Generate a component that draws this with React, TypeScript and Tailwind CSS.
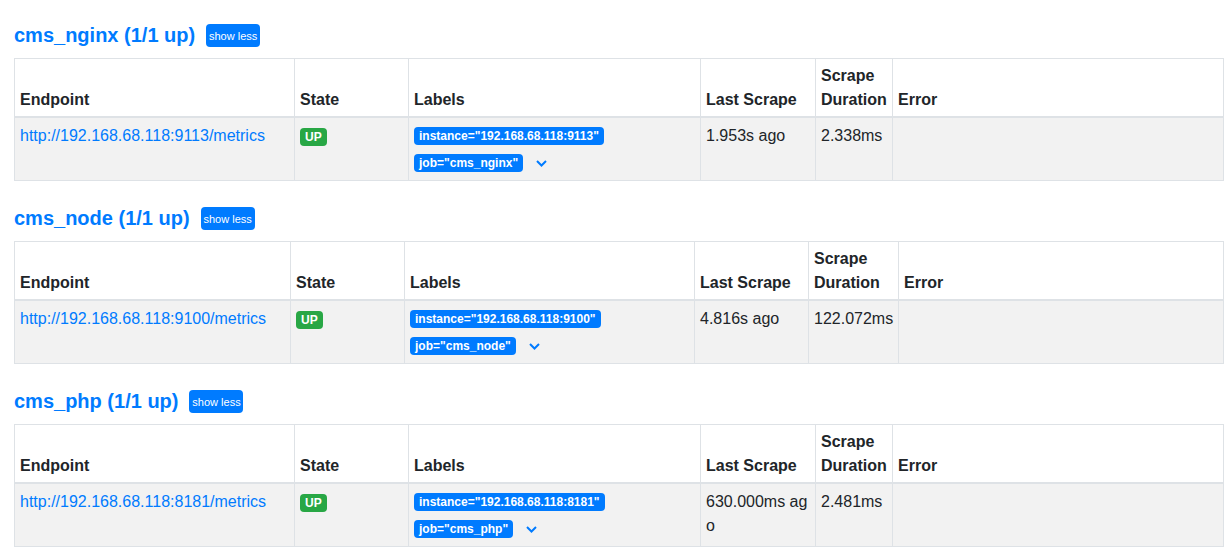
import React from 'react';

interface Target {
  endpoint: string;
  instance: string;
  job: string;
  lastScrape: string;
  duration: string;
}

interface Pool {
  name: string;
  cols: number[];
  target: Target;
}

const pools: Pool[] = [
  {
    name: 'cms_nginx',
    cols: [280, 114, 292, 115, 77, 331],
    target: {
      endpoint: 'http://192.168.68.118:9113/metrics',
      instance: '192.168.68.118:9113',
      job: 'cms_nginx',
      lastScrape: '1.953s ago',
      duration: '2.338ms',
    },
  },
  {
    name: 'cms_node',
    cols: [276, 114, 290, 114, 90, 325],
    target: {
      endpoint: 'http://192.168.68.118:9100/metrics',
      instance: '192.168.68.118:9100',
      job: 'cms_node',
      lastScrape: '4.816s ago',
      duration: '122.072ms',
    },
  },
  {
    name: 'cms_php',
    cols: [280, 114, 292, 115, 77, 331],
    target: {
      endpoint: 'http://192.168.68.118:8181/metrics',
      instance: '192.168.68.118:8181',
      job: 'cms_php',
      lastScrape: '630.000ms ago',
      duration: '2.481ms',
    },
  },
];

const th = 'border border-[#dee2e6] border-b-2 px-[5px] pt-[5px] pb-[4px] text-left align-bottom font-bold';
const td = 'border border-[#dee2e6] px-[5px] pt-[6px] pb-[3px] align-top';

function Badge({ children, color }: { children: React.ReactNode; color: string }) {
  return (
    <span
      className={`inline-block rounded-[4px] px-[5px] py-[3px] text-[12px] leading-[12px] font-bold text-white whitespace-nowrap ${color}`}
    >
      {children}
    </span>
  );
}

function Section({ pool }: { pool: Pool }) {
  const t = pool.target;
  return (
    <div className="pt-[23px]">
      <div className="flex items-center h-[24px] mb-[11px]">
        <h2 className="text-[20px] leading-[24px] font-bold text-[#007bff]">
          {pool.name} (1/1 up)
        </h2>
        <button className="ml-[11px] h-[23px] w-[54px] rounded-[4px] bg-[#007bff] text-[11px] text-white">
          show less
        </button>
      </div>
      <table className="table-fixed border-collapse w-[1209px] mb-[2px]">
        <colgroup>
          {pool.cols.map((w, i) => (
            <col key={i} style={{ width: w }} />
          ))}
        </colgroup>
        <thead>
          <tr>
            <th className={th}>Endpoint</th>
            <th className={th}>State</th>
            <th className={th}>Labels</th>
            <th className={th}>Last Scrape</th>
            <th className={th}>Scrape Duration</th>
            <th className={th}>Error</th>
          </tr>
        </thead>
        <tbody>
          <tr className="bg-[#f2f2f2]">
            <td className={td}>
              <a className="text-[#007bff]">{t.endpoint}</a>
            </td>
            <td className={td}>
              <Badge color="bg-[#28a745]">UP</Badge>
            </td>
            <td className={td}>
              <div className="h-[24px] flex items-center">
                <Badge color="bg-[#007bff]">instance="{t.instance}"</Badge>
              </div>
              <div className="h-[29px] flex items-center">
                <Badge color="bg-[#007bff]">job="{t.job}"</Badge>
                <svg className="ml-[13px] mt-[1px]" width="11" height="7" viewBox="0 0 11 7">
                  <polyline points="1,1 5.5,5.5 10,1" fill="none" stroke="#007bff" strokeWidth="2" />
                </svg>
              </div>
            </td>
            <td className={`${td} break-all`}>{t.lastScrape}</td>
            <td className={td}>{t.duration}</td>
            <td className={td}></td>
          </tr>
        </tbody>
      </table>
    </div>
  );
}

export default function App() {
  return (
    <div
      className="min-h-screen bg-white pl-[14px] text-[16px] leading-[24px] text-[#212529]"
      style={{ fontFamily: '"Liberation Sans", Arial, sans-serif' }}
    >
      {pools.map((p) => (
        <Section key={p.name} pool={p} />
      ))}
    </div>
  );
}
